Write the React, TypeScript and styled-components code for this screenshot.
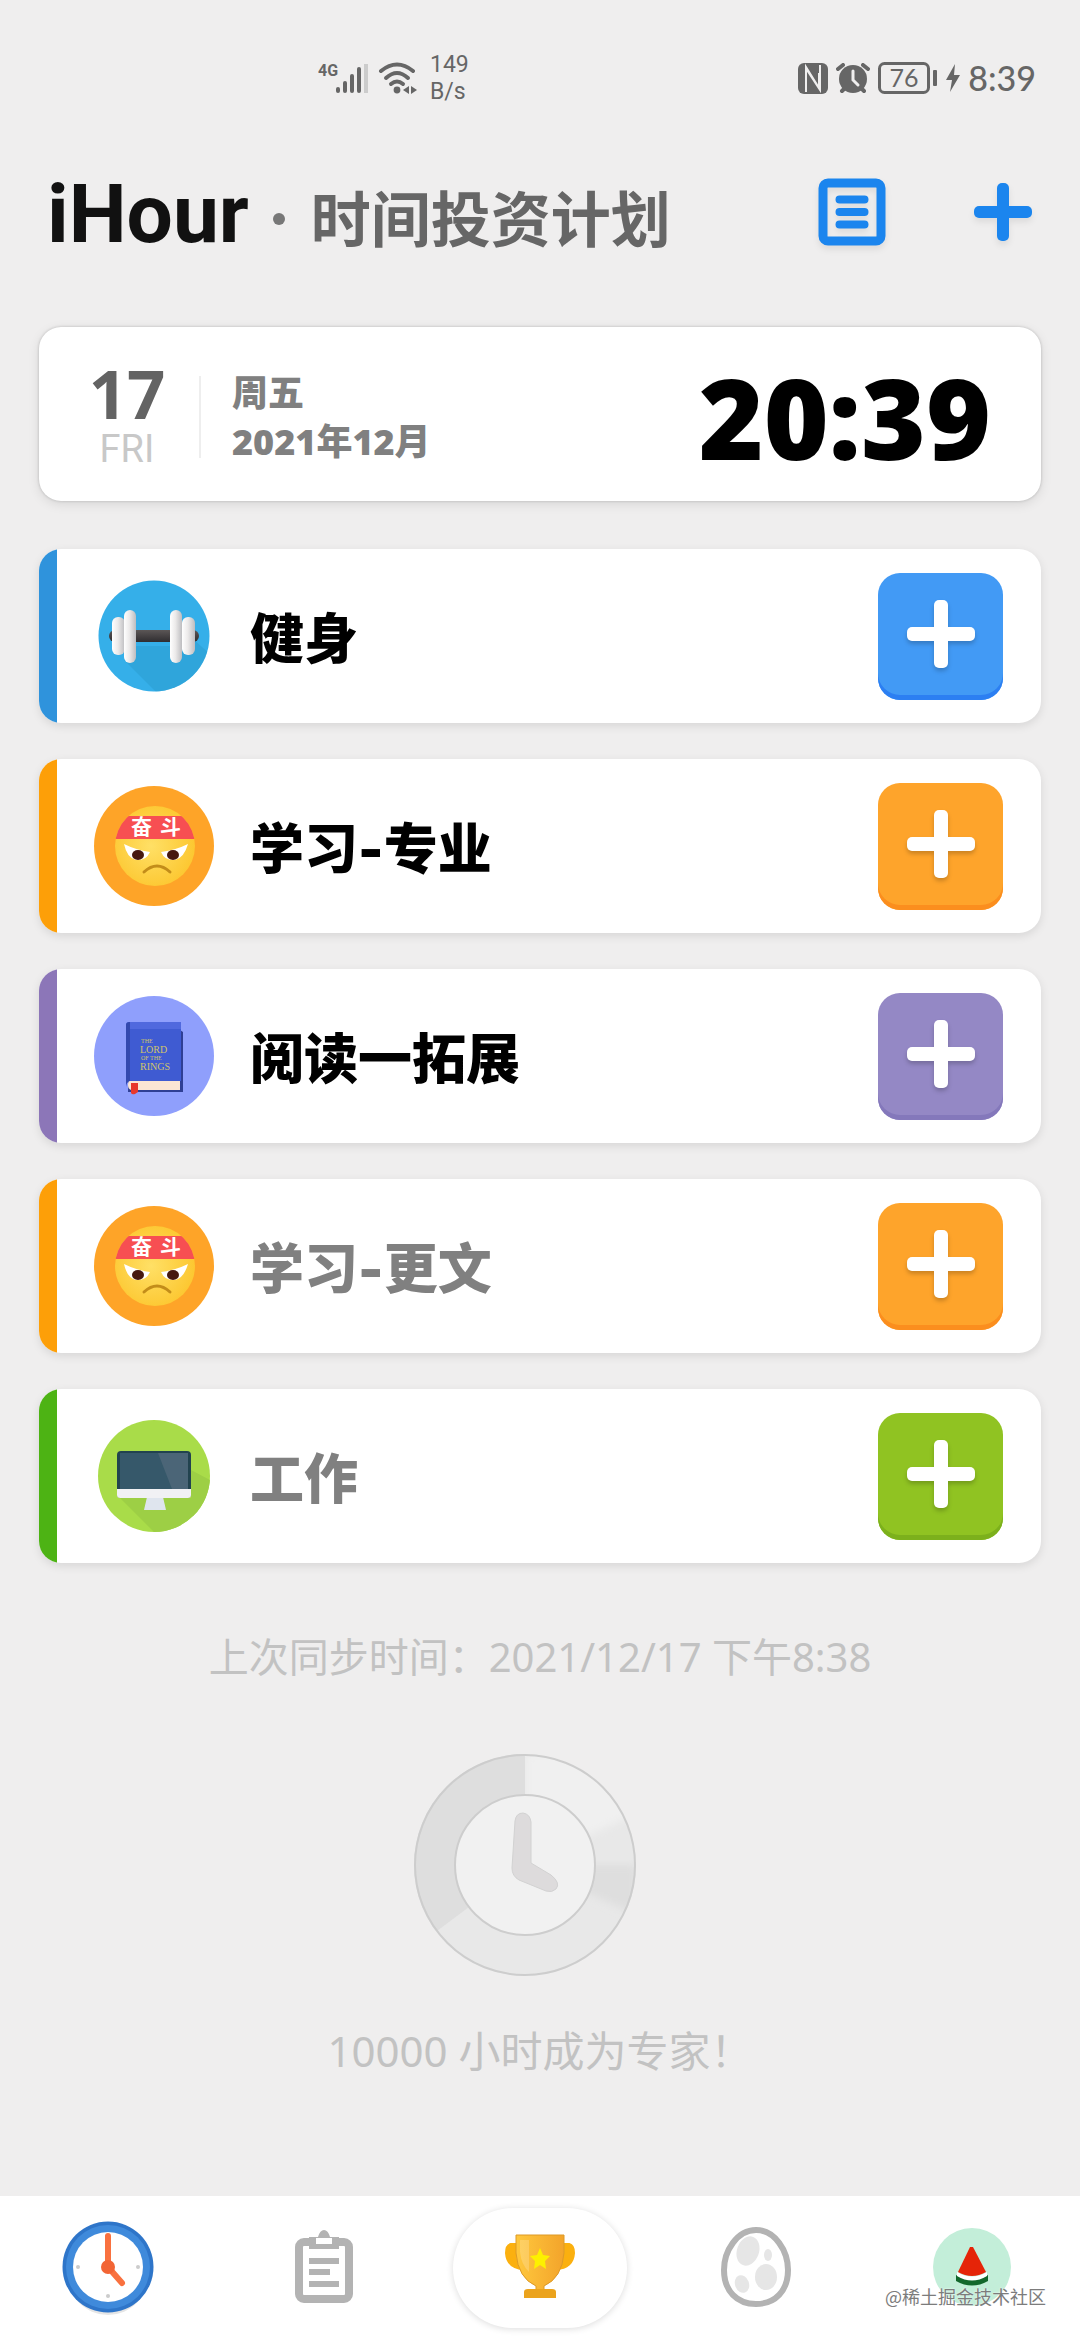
import React from 'react';
import styled, { createGlobalStyle } from 'styled-components';

const cjk = `"Noto Sans CJK SC", sans-serif`;

const GlobalStyle = createGlobalStyle`
  *, *::before, *::after { box-sizing: border-box; }
  body {
    margin: 0;
    background: #efeeee;
    font-family: "Noto Sans", ${cjk};
  }
  button { border: 0; padding: 0; background: none; font: inherit; cursor: pointer; }
  svg { display: block; }
  h1, h2, p { margin: 0; }
`;

const Page = styled.div`
  display: flex;
  flex-direction: column;
  min-height: 100vh;
`;

const StatusBar = styled.div`
  display: flex;
  align-items: center;
  justify-content: space-between;
  padding: 50px 44px 0 318px;
  height: 106px;
  color: #666;
`;

const StatusGroup = styled.div<{ $gap: number }>`
  display: flex;
  align-items: center;
  gap: ${(p) => p.$gap}px;
`;

const NetSpeed = styled.div`
  margin-left: 4px;
  font: 400 23px/27px Roboto, sans-serif;
`;

const StatusTime = styled.span`
  font: 500 34px/42px Lato, sans-serif;
`;

const Header = styled.header`
  display: flex;
  align-items: center;
  justify-content: space-between;
  padding: 60px 48px 63px 47px;
`;

const Title = styled.h1`
  display: flex;
  align-items: baseline;
  font: 700 82px/96px Roboto, sans-serif;
  color: #111;
`;

const Subtitle = styled.span`
  font: 700 60px/96px ${cjk};
  color: #666;
`;

const Dot = styled.span`
  align-self: center;
  width: 12px;
  height: 12px;
  margin: 8px 26px 0 24px;
  border-radius: 50%;
  background: #777;
`;

const Actions = styled.div`
  display: flex;
  align-items: center;
  gap: 88px;
  padding-bottom: 6px;
`;

const IconButton = styled.button`
  display: block;
  filter: drop-shadow(0 4px 3px rgba(0, 0, 0, 0.08));
`;

const Main = styled.main`
  display: flex;
  flex-direction: column;
  padding: 0 39px;
`;

const Card = styled.section`
  display: flex;
  align-items: center;
  height: 174px;
  border-radius: 22px;
  background: #fff;
  box-shadow: 0 3px 10px rgba(0, 0, 0, 0.1);
`;

const DateCard = styled(Card)`
  padding: 6px 50px 0 39px;
  box-shadow: 0 0 3px rgba(0, 0, 0, 0.2), 0 3px 12px rgba(0, 0, 0, 0.1);
`;

const DayBlock = styled.div`
  width: 98px;
  text-align: center;
`;

const Day = styled.div`
  font: 700 67px/64px "Noto Sans", sans-serif;
  color: #636363;
`;

const WeekAbbr = styled.div`
  font: 400 38px/48px Roboto, sans-serif;
  color: #c8c8c8;
`;

const Divider = styled.div`
  width: 2px;
  height: 82px;
  margin: 0 31px 0 23px;
  background: #eee;
`;

const DateText = styled.div`
  flex: 1;
  font: 800 36px/49px "Open Sans", ${cjk};
  color: #808080;
`;

const BigTime = styled.time`
  font: 800 111px/120px "Open Sans", sans-serif;
  color: #000;
`;

const TaskList = styled.ul`
  display: flex;
  flex-direction: column;
  gap: 36px;
  margin: 48px 0 0;
  padding: 0;
  list-style: none;
`;

const TaskCard = styled(Card).attrs({ as: 'li' })<{ $accent: string }>`
  overflow: hidden;
  padding-right: 38px;

  &::before {
    content: '';
    align-self: stretch;
    width: 18px;
    background: ${(p) => p.$accent};
  }
`;

const Avatar = styled.div`
  display: flex;
  justify-content: center;
  width: 120px;
  margin: 0 36px 0 37px;
`;

const TaskName = styled.h2<{ $muted: boolean }>`
  flex: 1;
  padding-top: 8px;
  font: 900 54px/72px Inter, ${cjk};
  color: ${(p) => (p.$muted ? '#808080' : '#000')};
`;

const AddButton = styled.button<{ $color: string; $edge: string }>`
  display: flex;
  align-items: center;
  justify-content: center;
  width: 125px;
  height: 127px;
  border-radius: 22px;
  background: ${(p) => p.$color};
  box-shadow: inset 0 -5px 0 ${(p) => p.$edge};
  padding-bottom: 4px;

  svg { filter: drop-shadow(0 3px 2px rgba(0, 0, 0, 0.2)); }
`;

const Footer = styled.footer`
  display: flex;
  flex-direction: column;
  align-items: center;
  padding: 66px 0 90px;
  color: #c2c2c2;
`;

const SyncTime = styled.p`
  font: 400 40px/56px "Noto Sans", ${cjk};
`;

const GhostClock = styled.div`
  margin: 68px 0 44px;
  padding-right: 30px;
`;

const Motto = styled.p`
  font: 400 42px/60px "Noto Sans", ${cjk};
`;

const NavBar = styled.nav`
  position: relative;
  display: grid;
  grid-template-columns: repeat(5, 1fr);
  margin-top: auto;
  height: 144px;
  background: #fff;
`;

const NavItem = styled.button`
  display: flex;
  align-items: center;
  justify-content: center;
`;

const TrophyPill = styled.span`
  display: flex;
  align-items: center;
  justify-content: center;
  width: 174px;
  height: 120px;
  border-radius: 60px;
  background: #fff;
  box-shadow: 0 1px 7px rgba(0, 0, 0, 0.14);
`;

const Watermark = styled.span`
  position: absolute;
  right: 34px;
  bottom: 31px;
  font: 400 18px/26px ${cjk};
  color: #7c7c7c;
  text-shadow: 0 0 2px #fff;
`;

const Signal = () => (
  <svg width="52" height="34" viewBox="0 0 52 34" aria-hidden="true">
    <text x="0" y="15" fontFamily="Roboto" fontWeight="700" fontSize="16" fill="#666">4G</text>
    <g fill="#666">
      <rect x="18" y="26" width="4" height="6" rx="2" />
      <rect x="25" y="20" width="4" height="12" rx="2" />
      <rect x="32" y="13" width="4" height="19" rx="2" />
      <rect x="39" y="6" width="4" height="26" rx="2" />
    </g>
    <rect x="46" y="3" width="4" height="29" fill="#ccc" />
  </svg>
);

const Wifi = () => (
  <svg width="40" height="34" viewBox="0 0 40 34" aria-hidden="true">
    <g fill="none" stroke="#666" strokeWidth="4" strokeLinecap="round">
      <path d="M3 10Q19 -3 35 10" />
      <path d="M8 17Q19 7 30 17" />
      <path d="M13 23Q19 18 25 23" />
    </g>
    <circle cx="19" cy="29" r="3.4" fill="#666" />
    <path d="M31 25v8l-6-4zM33 25v8l6-4z" fill="#666" />
  </svg>
);

const Nfc = () => (
  <svg width="30" height="31" viewBox="0 0 30 31" aria-hidden="true">
    <rect width="30" height="31" rx="6" fill="#666" />
    <path d="M8 29V4L21 25V10M22 2V27L9 7" fill="none" stroke="#efeeee" strokeWidth="2" />
  </svg>
);

const Alarm = () => (
  <svg width="34" height="31" viewBox="0 0 34 31" aria-hidden="true">
    <path d="M2 6L7 2M32 6L27 2M6 28l3-3M28 28l-3-3" stroke="#666" strokeWidth="4" strokeLinecap="round" />
    <circle cx="17" cy="16" r="14" fill="#666" />
    <path d="M17 8v9l5 5" fill="none" stroke="#efeeee" strokeWidth="3" strokeLinecap="round" />
  </svg>
);

const Battery = () => (
  <svg width="60" height="32" viewBox="0 0 60 32" aria-hidden="true">
    <rect x="1.5" y="1.5" width="49" height="29" rx="5" fill="none" stroke="#666" strokeWidth="3" />
    <rect x="55" y="8" width="4" height="16" rx="1" fill="#666" />
    <text x="26" y="25" textAnchor="middle" fontFamily="Lato" fontSize="25" fill="#666">76</text>
  </svg>
);

const Bolt = () => (
  <svg width="14" height="28" viewBox="0 0 14 28" aria-hidden="true">
    <path d="M9 0L0 16h6L4 28L14 11H8z" fill="#666" />
  </svg>
);

const ListIcon = () => (
  <svg width="68" height="68" viewBox="0 0 68 68" aria-hidden="true">
    <rect x="5" y="5" width="58" height="58" rx="5" fill="none" stroke="#1b85ee" strokeWidth="9" />
    <path d="M21.500 21.500h25M21.500 34h25M21.500 46.500h25" stroke="#1b85ee" strokeWidth="8" strokeLinecap="round" />
  </svg>
);

const Plus = ({ size, weight, color }: { size: number; weight: number; color: string }) => {
  const start = (size - weight) / 2;
  return (
    <svg width={size} height={size} viewBox={`0 0 ${size} ${size}`} aria-hidden="true">
      <rect x={start} width={weight} height={size} rx="5" fill={color} />
      <rect y={start} width={size} height={weight} rx="5" fill={color} />
    </svg>
  );
};

const Dumbbell = () => (
  <svg width="112" height="112" viewBox="0 0 112 112" aria-hidden="true">
    <defs>
      <linearGradient id="plate">
        <stop offset="0" stopColor="#fff" />
        <stop offset="0.45" stopColor="#eceaea" />
        <stop offset="1" stopColor="#bdbdc0" />
      </linearGradient>
      <linearGradient id="bar" x2="0" y2="1">
        <stop offset="0" stopColor="#5b5656" />
        <stop offset="1" stopColor="#2f2d30" />
      </linearGradient>
      <clipPath id="dumbClip"><circle cx="56" cy="56" r="55.500" /></clipPath>
    </defs>
    <g clipPath="url(#dumbClip)">
      <rect width="112" height="112" fill="#35afe9" />
      <path d="M26 80L58 112h54V74L96 60L84 66H38z" fill="#2b9ed2" opacity="0.6" />
    </g>
    <rect x="11" y="50" width="90" height="12" rx="6" fill="url(#bar)" />
    <rect x="14" y="37" width="13" height="38" rx="6" fill="url(#plate)" />
    <rect x="26" y="30" width="12" height="53" rx="6" fill="url(#plate)" />
    <rect x="84" y="37" width="13" height="38" rx="6" fill="url(#plate)" />
    <rect x="72" y="30" width="12" height="53" rx="6" fill="url(#plate)" />
  </svg>
);

const Face = ({ id }: { id: string }) => (
  <svg width="120" height="120" viewBox="0 0 120 120" aria-hidden="true">
    <defs>
      <radialGradient id={`${id}skin`} cx="0.45" cy="0.5" r="0.6">
        <stop offset="0" stopColor="#ffe066" />
        <stop offset="1" stopColor="#fcc52c" />
      </radialGradient>
      <clipPath id={`${id}clip`}><circle cx="61" cy="60" r="40" /></clipPath>
    </defs>
    <circle cx="60" cy="60" r="60" fill="#fea428" />
    <circle cx="61" cy="60" r="40" fill={`url(#${id}skin)`} />
    <rect x="20" y="30" width="82" height="23" fill="#f74f52" clipPath={`url(#${id}clip)`} />
    <g fontFamily="Noto Sans CJK SC" fontWeight="700" fontSize="21" fill="#fff">
      <text x="37" y="48">奋</text>
      <text x="66" y="48">斗</text>
    </g>
    <path d="M30 58Q42 64 56 66Q52 75 42 74Q33 72 30 58zM94 58Q82 64 67 66Q71 75 81 74Q90 72 94 58z" fill="#fff" />
    <ellipse cx="44" cy="69" rx="6" ry="5" fill="#46180f" />
    <ellipse cx="79" cy="69" rx="6" ry="5" fill="#46180f" />
    <path d="M50 86Q63 74 76 86" fill="none" stroke="#c38d1a" strokeWidth="3" strokeLinecap="round" />
  </svg>
);

const Book = () => (
  <svg width="120" height="120" viewBox="0 0 120 120" aria-hidden="true">
    <circle cx="60" cy="60" r="60" fill="#8f9ffc" />
    <path d="M36 34h50l3 2v60H34z" fill="#2f3f94" />
    <path d="M35 26h52v59H36q-4 1-4 6V29q0-3 3-3z" fill="#3f5bd2" />
    <path d="M36 26h51v7H36z" fill="#5069de" />
    <path d="M32 29q0-3 4-3v59q-4 1-4 6z" fill="#3349ae" />
    <path d="M36 85h50v9H37q-3-1-3-5t2-4z" fill="#fbe6d4" />
    <path d="M37 87h7v9l-3 2q-3 1-4-1z" fill="#e8382d" />
    <g fontFamily="Liberation Serif" fill="#d0c46a">
      <text x="47" y="47" fontSize="6">THE</text>
      <text x="46" y="57" fontSize="10">LORD</text>
      <text x="47" y="64" fontSize="6">OF THE</text>
      <text x="46" y="74" fontSize="10">RINGS</text>
    </g>
  </svg>
);

const Monitor = () => (
  <svg width="112" height="112" viewBox="0 0 112 112" aria-hidden="true">
    <defs>
      <clipPath id="monClip"><circle cx="56" cy="56" r="56" /></clipPath>
    </defs>
    <g clipPath="url(#monClip)">
      <rect width="112" height="112" fill="#a9dc49" />
      <path d="M20 76L56 112h56V60L93 50v28z" fill="#9dcf45" />
    </g>
    <path d="M46 90l3-13h16l3 13z" fill="#dfe5ee" />
    <rect x="19" y="31" width="74" height="47" rx="4" fill="#22434f" />
    <rect x="22" y="33" width="68" height="36" fill="#36586a" />
    <path d="M60 33h30v36H74z" fill="#4b6577" />
    <path d="M19 69h74v6q0 3-3 3H22q-3 0-3-3z" fill="#f1f1f4" />
  </svg>
);

const GhostClockIcon = () => (
  <svg width="224" height="224" viewBox="0 0 224 224" aria-hidden="true">
    <defs>
      <clipPath id="ghostClip"><circle cx="112" cy="112" r="111" /></clipPath>
      <filter id="soft"><feGaussianBlur stdDeviation="4" /></filter>
    </defs>
    <circle cx="112" cy="112" r="111" fill="#e8e8e8" />
    <g clipPath="url(#ghostClip)">
      <path d="M112 112V-20H-20v236L24 178z" fill="#dedede" />
      <path d="M112 112V0h112v60z" fill="#f0f0f0" filter="url(#soft)" />
      <path d="M112 112V0H90v112z" fill="#dedede" />
      <path d="M112 112h112v50z" fill="#dedede" filter="url(#soft)" />
    </g>
    <circle cx="112" cy="112" r="110" fill="none" stroke="#cdcdcd" strokeWidth="2" />
    <circle cx="112" cy="112" r="70" fill="#f1f1f1" stroke="#cdcdcd" strokeWidth="2" />
    <path d="M102 68Q103 60 110 60Q117 61 118 69V110L138 122Q148 130 143 136Q139 140 133 138L106 127Q99 123 99 115z" fill="#dddbdc" stroke="#d2d2d2" />
  </svg>
);

const NavClock = () => (
  <svg width="92" height="98" viewBox="0 0 92 98" aria-hidden="true">
    <ellipse cx="46" cy="52" rx="42" ry="44" fill="#000" opacity="0.1" />
    <circle cx="46" cy="48" r="45.500" fill="#2e75c9" />
    <circle cx="46" cy="48" r="42" fill="#3f8adb" />
    <circle cx="46" cy="48" r="35" fill="#fff" />
    <g fill="#ccc">
      <circle cx="16" cy="48" r="2" />
      <circle cx="76" cy="48" r="2" />
      <circle cx="46" cy="77" r="2" />
    </g>
    <path d="M46 17V48L60 64" fill="none" stroke="#f9713f" strokeWidth="6" strokeLinecap="round" strokeLinejoin="round" />
    <circle cx="46" cy="48" r="7" fill="#f26535" />
  </svg>
);

const Clipboard = () => (
  <svg width="58" height="76" viewBox="0 0 58 76" aria-hidden="true">
    <rect x="4" y="12" width="50" height="57" rx="5" fill="none" stroke="#b3b3b3" strokeWidth="8" />
    <path d="M14 7h9Q25 0 29 0t6 7h9v12H14z" fill="#b3b3b3" />
    <rect x="21" y="8" width="16" height="6" fill="#fff" />
    <path d="M14 31h30M14 42h21M14 54h30" stroke="#b3b3b3" strokeWidth="6" />
  </svg>
);

const Trophy = () => (
  <svg width="72" height="68" viewBox="0 0 72 68" aria-hidden="true">
    <defs>
      <linearGradient id="cup">
        <stop offset="0" stopColor="#ffc83d" />
        <stop offset="1" stopColor="#f3a42b" />
      </linearGradient>
    </defs>
    <path d="M14 11H7Q3 12 3 19Q4 33 20 34M58 11h7Q69 12 69 19Q68 33 52 34" fill="#fbb00f" stroke="#fbb00f" strokeWidth="4" />
    <path d="M12 1h48v18Q58 44 40 52v4h-8v-4Q14 44 12 19z" fill="url(#cup)" stroke="#dd9a27" />
    <path d="M16 6h9v32Q17 30 16 18z" fill="#fff" opacity="0.2" />
    <path d="M36 14l3 7 7 1-5 5 1 8-6-4-6 4 1-8-5-5 7-1z" fill="#fdf000" />
    <path d="M20 64v-6q0-3 4-3h24q4 0 4 3v6z" fill="#eba31d" />
  </svg>
);

const Egg = () => (
  <svg width="72" height="82" viewBox="0 0 72 82" aria-hidden="true">
    <path d="M36 3C55 3 68 24 68 43C68 64 55 77 36 77S4 64 4 43C4 24 17 3 36 3z" fill="#fff" stroke="#b3b3b3" strokeWidth="6" />
    <g fill="#e6e6e6">
      <ellipse cx="28" cy="24" rx="11" ry="15" transform="rotate(20 28 24)" />
      <ellipse cx="48" cy="28" rx="4" ry="6" />
      <ellipse cx="46" cy="50" rx="11" ry="13" />
      <ellipse cx="22" cy="57" rx="7" ry="9" transform="rotate(-20 22 57)" />
    </g>
  </svg>
);

const Melon = () => (
  <svg width="78" height="80" viewBox="0 0 78 80" aria-hidden="true">
    <circle cx="39" cy="39" r="39" fill="#c3eed9" />
    <path d="M23 47Q39 56 55 47V53Q39 62 23 53z" fill="#12682c" />
    <path d="M24 44Q39 53 54 44V48Q39 57 24 48z" fill="#fff" />
    <path d="M37 19L25 44Q39 52 53 44L40 19z" fill="#e52408" />
  </svg>
);

const tasks = [
  { name: '健身', accent: '#2f93dc', color: '#429af5', edge: '#2c7ff2', muted: false, icon: <Dumbbell /> },
  { name: '学习-专业', accent: '#fd9f08', color: '#fea42b', edge: '#fb8e1e', muted: false, icon: <Face id="a" /> },
  { name: '阅读一拓展', accent: '#8c76b8', color: '#9488c5', edge: '#8478bb', muted: false, icon: <Book /> },
  { name: '学习-更文', accent: '#fd9f08', color: '#fea42b', edge: '#fb8e1e', muted: true, icon: <Face id="b" /> },
  { name: '工作', accent: '#4db314', color: '#90c322', edge: '#7cb01c', muted: true, icon: <Monitor /> },
];

export default function App() {
  return (
    <Page>
      <GlobalStyle />
      <StatusBar>
        <StatusGroup $gap={8}>
          <Signal />
          <Wifi />
          <NetSpeed>149<br />B/s</NetSpeed>
        </StatusGroup>
        <StatusGroup $gap={8}>
          <Nfc />
          <Alarm />
          <Battery />
          <Bolt />
          <StatusTime>8:39</StatusTime>
        </StatusGroup>
      </StatusBar>

      <Header>
        <Title>
          iHour
          <Dot />
          <Subtitle>时间投资计划</Subtitle>
        </Title>
        <Actions>
          <IconButton type="button" aria-label="列表"><ListIcon /></IconButton>
          <IconButton type="button" aria-label="新建"><Plus size={58} weight={12} color="#1b85ee" /></IconButton>
        </Actions>
      </Header>

      <Main>
        <DateCard>
          <DayBlock>
            <Day>17</Day>
            <WeekAbbr>FRI</WeekAbbr>
          </DayBlock>
          <Divider />
          <DateText>周五<br />2021年12月</DateText>
          <BigTime>20:39</BigTime>
        </DateCard>

        <TaskList>
          {tasks.map((t) => (
            <TaskCard key={t.name} $accent={t.accent}>
              <Avatar>{t.icon}</Avatar>
              <TaskName $muted={t.muted}>{t.name}</TaskName>
              <AddButton type="button" aria-label={`开始 ${t.name}`} $color={t.color} $edge={t.edge}>
                <Plus size={68} weight={14} color="#fff" />
              </AddButton>
            </TaskCard>
          ))}
        </TaskList>
      </Main>

      <Footer>
        <SyncTime>上次同步时间：2021/12/17 下午8:38</SyncTime>
        <GhostClock><GhostClockIcon /></GhostClock>
        <Motto>10000 小时成为专家！</Motto>
      </Footer>

      <NavBar>
        <NavItem type="button" aria-label="计时"><NavClock /></NavItem>
        <NavItem type="button" aria-label="记录"><Clipboard /></NavItem>
        <NavItem type="button" aria-label="成就"><TrophyPill><Trophy /></TrophyPill></NavItem>
        <NavItem type="button" aria-label="孵化"><Egg /></NavItem>
        <NavItem type="button" aria-label="我的"><Melon /></NavItem>
        <Watermark>@稀土掘金技术社区</Watermark>
      </NavBar>
    </Page>
  );
}
